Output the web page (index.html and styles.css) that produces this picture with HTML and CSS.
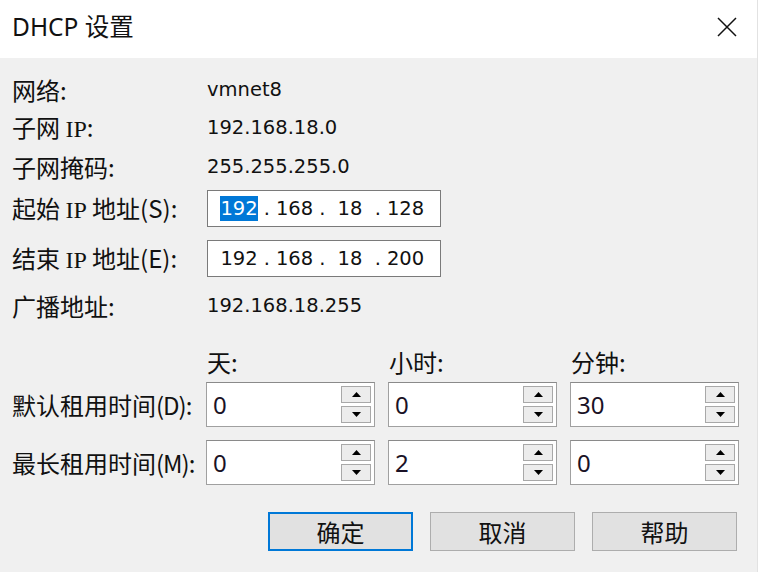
FILE: index.html
```html
<!DOCTYPE html>
<html lang="zh-CN">
<head>
<meta charset="utf-8">
<title>DHCP 设置</title>
<link rel="stylesheet" href="styles.css">
</head>
<body>
<div class="window">
  <div class="titlebar">
    <span class="title">DHCP 设置</span>
    <svg class="close" width="20" height="20" viewBox="0 0 20 20"><path d="M1 1 L19 19 M19 1 L1 19" stroke="#111" stroke-width="1.5" fill="none"/></svg>
  </div>
  <div class="info">
    <div class="label">网络:</div><div class="value">vmnet8</div>
    <div class="label">子网 <span class="lat">IP</span>:</div><div class="value">192.168.18.0</div>
    <div class="label">子网掩码:</div><div class="value">255.255.255.0</div>
    <div class="label">起始 <span class="lat">IP</span> 地址(S):</div>
    <div class="ipbox"><span class="oct"><span class="sel">192</span></span><span class="dot">.</span><span class="oct">168</span><span class="dot">.</span><span class="oct">18</span><span class="dot">.</span><span class="oct">128</span></div>
    <div class="label">结束 <span class="lat">IP</span> 地址(E):</div>
    <div class="ipbox"><span class="oct">192</span><span class="dot">.</span><span class="oct">168</span><span class="dot">.</span><span class="oct">18</span><span class="dot">.</span><span class="oct">200</span></div>
    <div class="label">广播地址:</div><div class="value">192.168.18.255</div>
  </div>
  <div class="row heads">
    <div class="rlabel"></div><div class="cell head">天:</div><div class="cell head">小时:</div><div class="cell head">分钟:</div>
  </div>
  <div class="row spinrow">
    <div class="rlabel label">默认租用时间<span class="par">(D)</span>:</div>
    <div class="cell spin"><span class="num">0</span><span class="btns"><span class="sb"><svg width="9" height="5" viewBox="0 0 9 5"><polygon points="0,5 4.5,0 9,5" fill="#000"/></svg></span><span class="sb"><svg width="9" height="5" viewBox="0 0 9 5"><polygon points="0,0 9,0 4.5,5" fill="#000"/></svg></span></span></div>
    <div class="cell spin"><span class="num">0</span><span class="btns"><span class="sb"><svg width="9" height="5" viewBox="0 0 9 5"><polygon points="0,5 4.5,0 9,5" fill="#000"/></svg></span><span class="sb"><svg width="9" height="5" viewBox="0 0 9 5"><polygon points="0,0 9,0 4.5,5" fill="#000"/></svg></span></span></div>
    <div class="cell spin"><span class="num">30</span><span class="btns"><span class="sb"><svg width="9" height="5" viewBox="0 0 9 5"><polygon points="0,5 4.5,0 9,5" fill="#000"/></svg></span><span class="sb"><svg width="9" height="5" viewBox="0 0 9 5"><polygon points="0,0 9,0 4.5,5" fill="#000"/></svg></span></span></div>
  </div>
  <div class="row spinrow second">
    <div class="rlabel label">最长租用时间<span class="par">(M)</span>:</div>
    <div class="cell spin"><span class="num">0</span><span class="btns"><span class="sb"><svg width="9" height="5" viewBox="0 0 9 5"><polygon points="0,5 4.5,0 9,5" fill="#000"/></svg></span><span class="sb"><svg width="9" height="5" viewBox="0 0 9 5"><polygon points="0,0 9,0 4.5,5" fill="#000"/></svg></span></span></div>
    <div class="cell spin"><span class="num">2</span><span class="btns"><span class="sb"><svg width="9" height="5" viewBox="0 0 9 5"><polygon points="0,5 4.5,0 9,5" fill="#000"/></svg></span><span class="sb"><svg width="9" height="5" viewBox="0 0 9 5"><polygon points="0,0 9,0 4.5,5" fill="#000"/></svg></span></span></div>
    <div class="cell spin"><span class="num">0</span><span class="btns"><span class="sb"><svg width="9" height="5" viewBox="0 0 9 5"><polygon points="0,5 4.5,0 9,5" fill="#000"/></svg></span><span class="sb"><svg width="9" height="5" viewBox="0 0 9 5"><polygon points="0,0 9,0 4.5,5" fill="#000"/></svg></span></span></div>
  </div>
  <div class="actions">
    <div class="btn default">确定</div>
    <div class="btn">取消</div>
    <div class="btn">帮助</div>
  </div>
</div>
</body>
</html>
```
FILE: styles.css
```css
html, body {
  margin: 0;
  padding: 0;
}
body {
  background: #f0f0f0;
  font-family: "Noto Sans CJK SC", sans-serif;
  font-size: 24px;
  color: #000;
  width: 758px;
  height: 572px;
  overflow: hidden;
}
.window {
  width: 758px;
  height: 572px;
  box-sizing: border-box;
  border-right: 1px solid #e2e2e2;
}
.titlebar {
  height: 58px;
  box-sizing: border-box;
  background: #fff;
  display: flex;
  align-items: center;
  justify-content: space-between;
  padding: 0 20px 4px 12px;
}
.title {
  font-family: "Noto Sans", "Noto Sans CJK SC", sans-serif;
  font-size: 24.5px;
  line-height: 1;
  color: #111;
}
.close {
  display: block;
}
.info {
  display: grid;
  grid-template-columns: 195px auto;
  grid-template-rows: 38px 38px 39px 45px 55px 40px;
  align-items: center;
  justify-items: start;
  padding: 13px 0 0 12px;
}
.label {
  line-height: 1;
  white-space: nowrap;
  color: #111;
}
.lat {
  font-family: "Liberation Serif", serif;
}
.par {
  letter-spacing: -1px;
}
.value {
  font-family: "DejaVu Sans", sans-serif;
  font-size: 19.5px;
  line-height: 1;
  color: #111;
}
.ipbox {
  width: 234px;
  height: 37px;
  box-sizing: border-box;
  border: 1px solid #7a7a7a;
  background: #fff;
  display: flex;
  align-items: center;
  padding-left: 11px;
  font-family: "DejaVu Sans", sans-serif;
  font-size: 19.5px;
  line-height: 1;
  color: #111;
}
.oct {
  width: 40px;
  text-align: center;
}
.dot {
  width: 15.5px;
  text-align: center;
}
.sel {
  background: #0078d7;
  color: #fff;
  padding: 1px 0;
}
.row {
  display: flex;
  align-items: center;
  gap: 13px;
  padding-left: 12px;
}
.rlabel {
  flex: none;
  width: 181px;
}
.cell {
  flex: none;
  width: 169px;
}
.heads {
  height: 41px;
  margin-top: 15px;
}
.head {
  line-height: 1;
  padding-left: 1px;
  box-sizing: border-box;
  color: #111;
}
.spinrow {
  height: 45px;
}
.spinrow.second {
  margin-top: 13px;
}
.spin {
  height: 45px;
  box-sizing: border-box;
  border: 1px solid #a0a0a0;
  border-top-color: #8a8a8a;
  background: #fff;
  display: flex;
  align-items: center;
  justify-content: space-between;
  padding: 0 3px 0 6px;
}
.num {
  font-family: "Noto Sans", sans-serif;
  font-size: 24px;
  line-height: 1;
  color: #1a1226;
}
.btns {
  display: flex;
  flex-direction: column;
  gap: 3px;
}
.sb {
  width: 30px;
  height: 17px;
  box-sizing: border-box;
  border: 1px solid #a8a8a8;
  background: #ececec;
  display: flex;
  align-items: center;
  justify-content: center;
}
.sb svg {
  display: block;
}
.actions {
  display: flex;
  justify-content: flex-end;
  gap: 17px;
  padding-right: 20px;
  margin-top: 27px;
}
.btn {
  width: 145px;
  height: 39px;
  box-sizing: border-box;
  border: 1px solid #adadad;
  background: #e1e1e1;
  display: flex;
  align-items: center;
  justify-content: center;
  line-height: 1;
  color: #111;
}
.btn.default {
  border: 2px solid #0078d7;
}
```
